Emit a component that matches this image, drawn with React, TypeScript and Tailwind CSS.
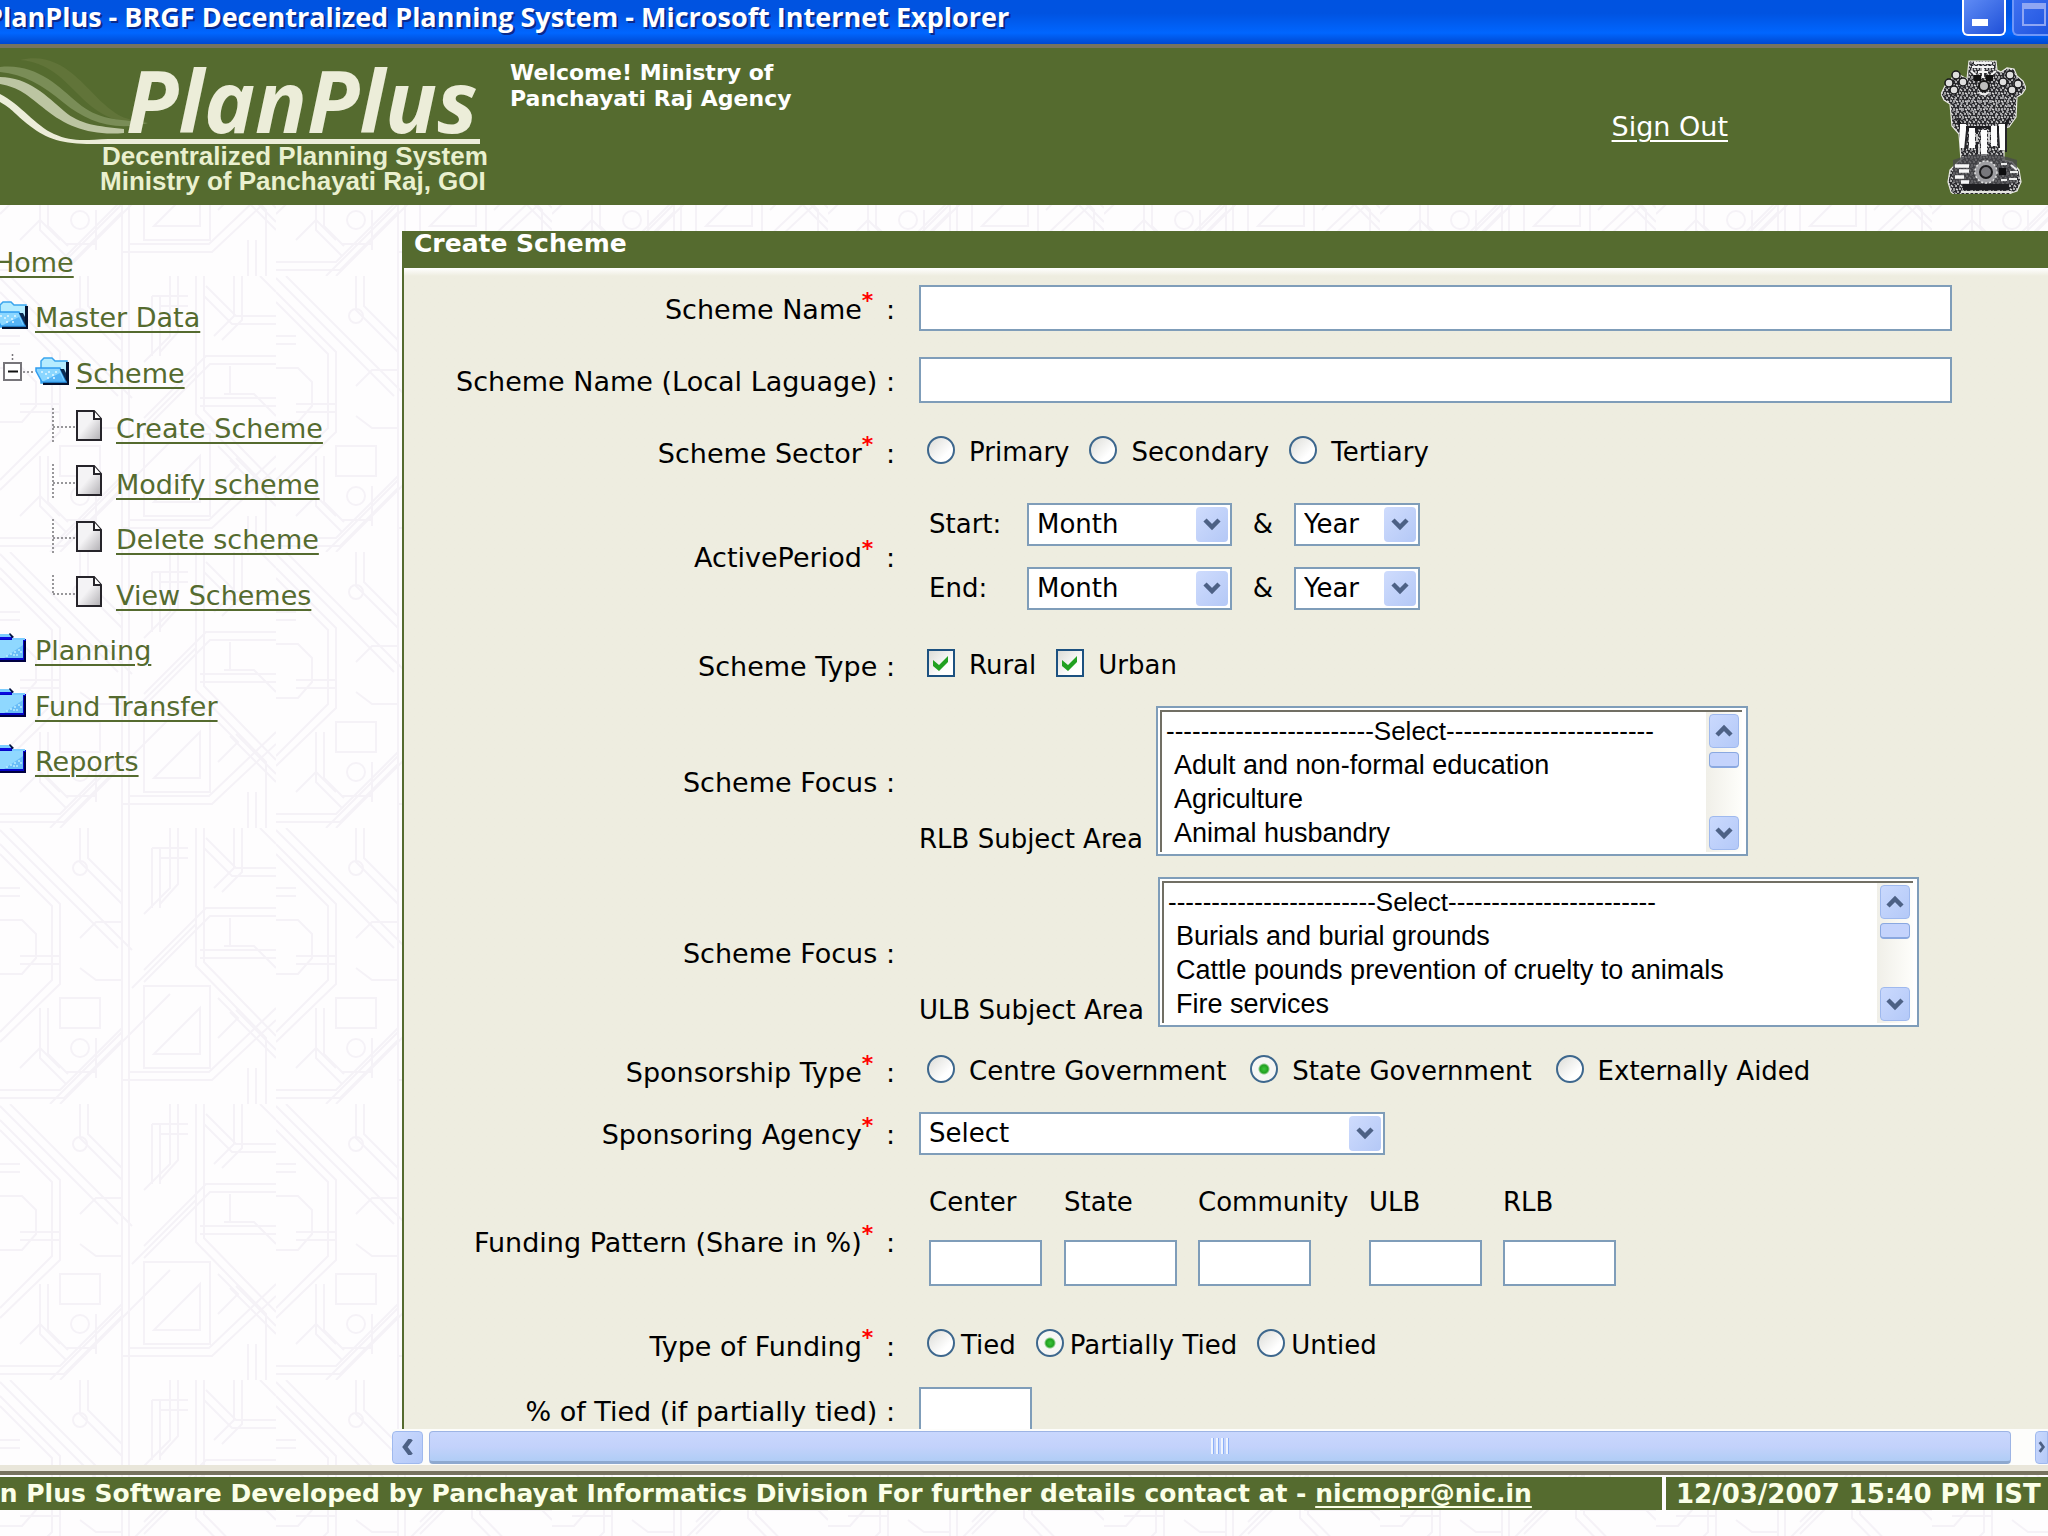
import type { ReactNode } from "react";

/* ---------- background ---------- */

function Backdrop() {
  return (
    <svg className="pointer-events-none absolute inset-0 h-full w-full" aria-hidden="true">
      <defs>
        <pattern id="lattice" width="276" height="276" patternUnits="userSpaceOnUse">
          <g fill="none" stroke="#f5f2f7" strokeWidth="2">
            <path d="M122 0v276M129 0v276M196 0v138l70 72v66M204 0v134l72 74M260 0l16 16M0 16l60 60v80l-60 58M0 26l52 52v74L0 204M0 92h22l14 14v24l-14 16H0M122 252h90l64-60M129 244h80l67-64M144 154l66-66h66M144 142l62-62h70M144 158h66v82h-66zM154 226l46-46v46zM196 96l-64 64M276 40h-40l-30-30M276 48h-44l-28-28M88 0v30l34 34M80 0v34l42 42M0 262h60l62-62M0 270h64l58-58M96 210v40M80 110l16-16h26M80 140l16 12h26M224 118h30l22 22M214 60l20-20v-40M222 64l20-20v-44" />
            <path d="M10 0l122 122M0 2l118 118M276 230l-46-46M276 222l-40-40M60 276l110-110M50 276l72-72M20 128h40M20 136h40M200 122h76M200 130h76M170 0v60l-26 26M178 0v56l-18 20M40 180v50l26 26M48 180v46l20 20" />
            <circle cx="80" cy="40" r="7" />
            <circle cx="80" cy="220" r="9" />
            <path d="M60 170h40v30H60zM66 244h30M230 90v28M160 20v60M152 20v60M152 20h36M160 30h28M0 60h20M0 68h20M256 240v36M248 240v36M218 170l20 20-20 20M20 240l20-20 20 20" />
          </g>
        </pattern>
      </defs>
      <rect width="100%" height="100%" fill="#fefdfe" />
      <rect width="100%" height="100%" fill="url(#lattice)" />
    </svg>
  );
}

/* ---------- icons ---------- */

function OpenFolder({ className }: { className?: string }) {
  return (
    <svg width="34" height="28" viewBox="0 0 34 28" className={className} aria-hidden="true">
      <path d="M6 8V4l3-3h8l3 3h12v22H6z" fill="#b5ecff" stroke="#3aa5ee" strokeWidth="1.5" />
      <path d="M31 5h3v23H8v-3h23z" fill="#05112e" />
      <path d="M1 11h24l6 14H7L1 14z" fill="#8ad6ff" stroke="#2f9cf0" strokeWidth="1.5" />
      <path d="M25 12l6 12v-8l-2-4z" fill="#0a2a52" />
      <path d="M9 24h20l-4-8z" fill="#55b4f7" />
      <path d="M6 15h2m2 2h2m1-2h2m2 3h2m1-3h2m-10 6h2m4 0h2" stroke="#e3f8ff" strokeWidth="1.6" />
    </svg>
  );
}

function ClosedFolder({ className }: { className?: string }) {
  return (
    <svg width="34" height="29" viewBox="0 0 34 29" className={className} aria-hidden="true">
      <path d="M0 2h19l3 4h12v22H0z" fill="#0505c8" />
      <path d="M32 8h2v21H0v-2h32z" fill="#000040" />
      <path d="M0 7h31v18H0z" fill="#8fd8ff" />
      <path d="M0 1h18l2 3H0z" fill="#7ccdff" />
      <path d="M20 5h13v2H20z" fill="#7ccdff" />
      <path d="M18 0l4 4-2 1-3-4z" fill="#03103c" />
      <path d="M0 5h19" stroke="#0a0ae0" strokeWidth="2" />
      <path d="M31 12v13H12z" fill="#69bcf7" />
      <path d="M14 23h2m2-2h2m2-2h2m2-2h2m-4 5h2m2-3h2m-9 3h2" stroke="#b9ecff" strokeWidth="1.6" />
    </svg>
  );
}

function PageIcon() {
  return (
    <svg width="26" height="31" viewBox="0 0 26 31" aria-hidden="true">
      <defs>
        <linearGradient id="sheet" x1="0" y1="0" x2="1" y2="1">
          <stop offset="0.45" stopColor="#f4f3f5" />
          <stop offset="1" stopColor="#b0aeb2" />
        </linearGradient>
      </defs>
      <path d="M1 1h17l7 8v21H1z" fill="url(#sheet)" stroke="#26242a" strokeWidth="2" />
      <path d="M18 1v8h7" fill="#fff" stroke="#26242a" strokeWidth="2" />
    </svg>
  );
}

function Chevron({ dir }: { dir: "up" | "down" | "left" | "right" }) {
  const d = {
    up: "M2 12l7-7 7 7",
    down: "M2 4l7 7 7-7",
    left: "M12 0L6 8l6 8",
    right: "M6 0l6 8-6 8",
  }[dir];
  return (
    <svg width="18" height="16" viewBox="0 0 18 16" aria-hidden="true">
      <path d={d} fill="none" stroke="#4d6185" strokeWidth="4.5" />
    </svg>
  );
}

function Branch({ last }: { last?: boolean }) {
  return (
    <svg width="24" height="34" viewBox="0 0 24 34" className="shrink-0" aria-hidden="true">
      <path d={last ? "M1 0v19" : "M1 0v34"} stroke="#77757a" strokeWidth="1.5" strokeDasharray="2 2" />
      <path d="M1 19h23" stroke="#77757a" strokeWidth="1.5" strokeDasharray="2 2" />
    </svg>
  );
}

function Emblem() {
  return (
    <svg width="85" height="134" viewBox="0 0 85 134" aria-label="State Emblem of India" role="img">
      <defs>
        <pattern id="carve" width="9" height="8" patternUnits="userSpaceOnUse">
          <rect width="9" height="8" fill="#2a2a2e" />
          <path d="M0 1h2M4 0v3M7 4h2M1 5l2 2M5 6h2M6 1l2 1" stroke="#d6d6d6" strokeWidth="1.4" />
          <path d="M2 3h2M5 4v1M0 7h1" stroke="#8b8b8f" strokeWidth="1.4" />
        </pattern>
      </defs>
      <path
        d="M28 1h27l1 9 4 2 6-4 7 1 3 7 6 5 3 7-4 6-5 3-1 20-7 10-5 1v32l8 2 7 8 2 12-4 9-6 2-3 7-3 3H21l-3-5-8-6-3-10 2-12 8-8 3-2-2-26-7-8-2-22-6-4-3-6 4-8 5-4 3-6 7-1 7 4z"
        fill="url(#carve)"
        stroke="#e9e9e4"
        strokeWidth="1.2"
      />
      <path d="M33 3h18M31 7h22M30 11l5 4M55 11l-5 4M42 6v12M37 12h10" stroke="#f4f4f4" strokeWidth="2.2" fill="none" />
      <path d="M33 15h7v6h-7zM45 15h7v6h-7z" fill="#111" />
      <circle cx="43" cy="26" r="5" fill="#bdbdbd" stroke="#161616" strokeWidth="2" />
      <path d="M38 32q5 5 10 0" stroke="#eee" strokeWidth="2" fill="none" />
      <g fill="#dedede" stroke="#18181a" strokeWidth="1.5">
        <circle cx="15" cy="15" r="4" />
        <circle cx="8" cy="23" r="4" />
        <circle cx="13" cy="30" r="4" />
        <circle cx="22" cy="22" r="4" />
        <circle cx="69" cy="15" r="4" />
        <circle cx="77" cy="24" r="4" />
        <circle cx="71" cy="30" r="4" />
        <circle cx="62" cy="22" r="4" />
      </g>
      <path d="M14 38l2 16M20 36l1 20M26 34l1 22M32 38l1 20M38 40v18M44 40v20M50 40v18M56 36l-1 20M62 36l-1 20M68 38l-2 16" stroke="#a9a9ad" strokeWidth="1.6" strokeDasharray="3 3" />
      <path d="M15 56l8 10h38l9-11-5 14-8 3-14-4-14 4-10-4z" fill="#1b1b1f" />
      <path d="M22 64v24M31 68v20M43 70v26M53 66v20M61 64v26" stroke="#fdfdfd" strokeWidth="6" />
      <path d="M26 70l-2 20M36 70v24M57 72l1 16M65 66v26" stroke="#232327" strokeWidth="2" />
      <path d="M36 74v8M38 84v10M48 72v10" stroke="#e5e5e5" strokeWidth="1.6" />
      <path d="M12 100q30-12 64 0v22q-32 10-64 0z" fill="#4a4a4e" opacity="0.75" />
      <circle cx="45" cy="112" r="11" fill="#9d9da1" stroke="#e2e2e2" strokeWidth="1.5" strokeDasharray="2 2" />
      <circle cx="45" cy="112" r="6" fill="#77777c" stroke="#1b1b1d" strokeWidth="2" />
      <path d="M14 106h14M18 111h10M14 117h9M20 122h8" stroke="#f7f7f7" strokeWidth="3.4" />
      <rect x="58" y="108" width="7" height="7" fill="#0d0d0f" />
      <path d="M70 105l6 5M69 112h8M68 119h8M60 104h6M60 120h6" stroke="#ececec" strokeWidth="2.2" />
      <path d="M22 127h46" stroke="#1c1c1f" strokeWidth="6" />
      <path d="M20 132h50" stroke="#e5e5e0" strokeWidth="1.8" />
    </svg>
  );
}

function Logo() {
  return (
    <svg width="500" height="157" viewBox="0 48 500 157" className="shrink-0" role="img" aria-label="PlanPlus">
      <path d="M20 60C60 50 82 84 104 104s30 14 42 18c-30 4-50-10-66-26S48 62 20 60z" fill="#617439" />
      <path d="M0 67c36-4 58 19 78 36s38 16 70 20c-34 9-62-2-84-20S24 74 0 72z" fill="#7a8d57" />
      <path d="M0 77c28 0 48 20 64 34s34 15 60 18v4c-34 3-58-7-78-23S20 88 0 84z" fill="#bcc5a2" />
      <path d="M0 94c20 10 36 32 54 40s30 6 54 5h372v5H100c-34 1-52-4-70-18S14 110 0 102z" fill="#ecedd9" />
      <text x="126" y="133" fontFamily="'Open Sans', sans-serif" fontWeight="700" fontStyle="italic" fontSize="86" fill="#ecedd9">
        PlanPlus
      </text>
      <g fontFamily="'Liberation Sans', sans-serif" fontWeight="700" fontSize="26" fill="#eaf0cf">
        <text x="102" y="165">Decentralized Planning System</text>
        <text x="100" y="190">Ministry of Panchayati Raj, GOI</text>
      </g>
    </svg>
  );
}

/* ---------- navigation ---------- */

const link = "underline decoration-2 underline-offset-4 text-[#556b2f]";

function NavRow({ children }: { children: ReactNode }) {
  return <li className="flex flex-1 items-center whitespace-nowrap">{children}</li>;
}

function Sidebar() {
  const pages = ["Create Scheme", "Modify scheme", "Delete scheme", "View Schemes"];
  const groups = ["Planning", "Fund Transfer", "Reports"];
  return (
    <nav className="relative w-[392px] shrink-0 overflow-hidden text-[27px]">
      <ul className="mt-1 flex h-[555px] flex-col">
        <NavRow>
          <a href="#home" className={`${link} -ml-1.5`}>Home</a>
        </NavRow>
        <NavRow>
          <OpenFolder className="-ml-1.5 mr-[7px] mb-1.5 shrink-0" />
          <a href="#master" className={link}>Master Data</a>
        </NavRow>
        <NavRow>
          <svg width="32" height="32" viewBox="0 0 32 32" className="mb-2 ml-[3px] shrink-0" aria-hidden="true">
            <path d="M9.5 0v7M20 18h12" stroke="#77757a" strokeWidth="1.5" strokeDasharray="2 2" />
            <rect x="1" y="9" width="17" height="17" fill="#fff" stroke="#77757a" strokeWidth="2" />
            <path d="M5 17.500h10" stroke="#111" strokeWidth="2" />
          </svg>
          <OpenFolder className="mb-1.5 mr-[7px] shrink-0" />
          <a href="#scheme" className={link}>Scheme</a>
        </NavRow>
        {pages.map((p, i) => (
          <NavRow key={p}>
            <span className="mb-2 ml-[52px] mr-3.5 flex items-center">
              <Branch last={i === pages.length - 1} />
              <PageIcon />
            </span>
            <a href="#page" className={link}>{p}</a>
          </NavRow>
        ))}
        {groups.map((g) => (
          <NavRow key={g}>
            <ClosedFolder className="-ml-2 mr-[9px] mb-2 shrink-0" />
            <a href="#group" className={link}>{g}</a>
          </NavRow>
        ))}
      </ul>
    </nav>
  );
}

/* ---------- form controls ---------- */

const box = "border-2 border-[#7f9db9] bg-white outline-none";

function Row({
  label,
  required,
  htmlFor,
  className,
  children,
}: {
  label: string;
  required?: boolean;
  htmlFor?: string;
  className: string;
  children: ReactNode;
}) {
  const text = (
    <>
      {label}
      {required && <sup className="mr-1 text-[22px] font-bold text-[#f00]">*</sup>} :
    </>
  );
  return (
    <div className={`flex gap-6 ${className}`}>
      <div className="w-[491px] shrink-0 self-center whitespace-nowrap pt-1 text-right text-[27px]">
        {htmlFor ? <label htmlFor={htmlFor}>{text}</label> : <span>{text}</span>}
      </div>
      {children}
    </div>
  );
}

function Radio({ name, label, checked, tight }: { name: string; label: string; checked?: boolean; tight?: boolean }) {
  return (
    <label className={`flex items-center ${tight ? "gap-1.5" : "gap-3.5"}`}>
      <input
        type="radio"
        name={name}
        defaultChecked={checked}
        className="mb-1 size-7 shrink-0 appearance-none rounded-full border-2 border-[#3d678d] bg-[linear-gradient(135deg,#dcdcd7,#ffffff_70%)] checked:bg-[radial-gradient(circle,#3cc43c_0,#21a121_4px,#f6f6f4_6px)]"
      />
      {label}
    </label>
  );
}

function Check({ label }: { label: string }) {
  return (
    <label className="flex items-center gap-3.5">
      <span className="relative mb-1 flex">
        <input type="checkbox" defaultChecked className="peer size-7 appearance-none border-2 border-[#1c5180] bg-[linear-gradient(135deg,#dcdcd7,#ffffff_70%)]" />
        <svg width="28" height="28" viewBox="0 0 28 28" className="pointer-events-none absolute inset-0 hidden peer-checked:block" aria-hidden="true">
          <path d="M6 11l6 5 9-9v6l-9 9-6-5z" fill="#21a121" />
        </svg>
      </span>
      {label}
    </label>
  );
}

function Dropdown({ id, label, option, className }: { id: string; label: string; option: string; className: string }) {
  return (
    <span className={`relative flex h-[43px] ${className}`}>
      <select id={id} aria-label={label} className={`${box} w-full appearance-none pl-2 text-[26px]`}>
        <option>{option}</option>
      </select>
      <span className="pointer-events-none absolute inset-y-1 right-1 flex w-8 items-center justify-center rounded-sm bg-linear-to-br from-[#cfdcfd] to-[#b4c8f6]">
        <Chevron dir="down" />
      </span>
    </span>
  );
}

const scrollButton = "flex items-center justify-center rounded-sm border border-[#9fb9ee] bg-linear-to-br from-[#cad9fd] to-[#b4c9f8]";

function ListBox({ id, items, className }: { id: string; items: string[]; className: string }) {
  return (
    <div className={`${box} flex h-[150px] p-0.5 pr-1 ${className}`}>
      <div className="flex w-full overflow-hidden border-l-2 border-t-2 border-[#716f64]">
        <select
          id={id}
          size={4}
          className="h-[140px] min-w-0 flex-1 overflow-hidden bg-white pl-1 pt-1 font-['Liberation_Sans',sans-serif] text-[27px] outline-none"
        >
          <option className="h-[34px] p-0 text-[26px] leading-[34px]">------------------------Select------------------------</option>
          {items.map((t) => (
            <option key={t} className="h-[34px] p-0 pl-2 leading-[34px]">{t}</option>
          ))}
        </select>
        <div className="flex w-9 flex-col items-center bg-linear-to-r from-[#f0efe8] to-[#fefefb] py-0.5">
          <button type="button" aria-label="Scroll up" className={`${scrollButton} h-[34px] w-[30px]`}>
            <Chevron dir="up" />
          </button>
          <span className="mt-1 h-4 w-[30px] rounded-sm border border-b-2 border-[#8aa8e0] bg-[#c4d3fc]" />
          <button type="button" aria-label="Scroll down" className={`${scrollButton} mt-auto h-[34px] w-[30px]`}>
            <Chevron dir="down" />
          </button>
        </div>
      </div>
    </div>
  );
}

function Period({ label, id }: { label: string; id: string }) {
  return (
    <div className="flex h-16 items-center">
      <span className="w-[98px]">{label}</span>
      <Dropdown id={`${id}-month`} label={`${label} month`} option="Month" className="w-[205px]" />
      <span className="w-[62px] text-center">&amp;</span>
      <Dropdown id={`${id}-year`} label={`${label} year`} option="Year" className="w-[126px]" />
    </div>
  );
}

function Share({ label, className }: { label: string; className: string }) {
  return (
    <label className={`flex flex-col gap-[21px] ${className}`}>
      <span className="leading-[34px]">{label}</span>
      <input type="text" className={`${box} h-[46px] w-[113px]`} />
    </label>
  );
}

function SchemeForm() {
  return (
    <form className="flex-1 overflow-hidden bg-linear-to-b from-white to-[#eeede0] to-[8px] text-[26px] leading-[34px] text-black">
      <Row label="Scheme Name" required htmlFor="name" className="mt-1 h-[72px] items-center">
        <input id="name" type="text" className={`${box} mr-24 h-[46px] flex-1 px-2`} />
      </Row>
      <Row label="Scheme Name (Local Laguage)" htmlFor="local" className="h-[72px] items-center">
        <input id="local" type="text" className={`${box} mr-24 h-[46px] flex-1 px-2`} />
      </Row>
      <Row label="Scheme Sector" required className="h-[72px] items-center">
        <div className="flex gap-5 pl-2">
          <Radio name="sector" label="Primary" />
          <Radio name="sector" label="Secondary" />
          <Radio name="sector" label="Tertiary" />
        </div>
      </Row>
      <Row label="ActivePeriod" required className="h-[136px] items-center">
        <div className="pl-2.5">
          <Period label="Start:" id="start" />
          <Period label="End:" id="end" />
        </div>
      </Row>
      <Row label="Scheme Type" className="h-[82px] items-center">
        <div className="flex gap-5 pl-2">
          <Check label="Rural" />
          <Check label="Urban" />
        </div>
      </Row>
      <Row label="Scheme Focus" className="mb-[21px] items-end">
        <div className="flex items-end gap-2">
          <label htmlFor="rlb" className="w-[229px]">RLB Subject Area</label>
          <ListBox id="rlb" className="w-[592px]" items={["Adult and non-formal education", "Agriculture", "Animal husbandry"]} />
        </div>
      </Row>
      <Row label="Scheme Focus" className="items-end">
        <div className="flex items-end gap-2">
          <label htmlFor="ulb" className="w-[231px]">ULB Subject Area</label>
          <ListBox
            id="ulb"
            className="w-[761px]"
            items={["Burials and burial grounds", "Cattle pounds prevention of cruelty to animals", "Fire services"]}
          />
        </div>
      </Row>
      <Row label="Sponsorship Type" required className="mt-2 h-[72px] items-center">
        <div className="flex gap-6 pl-2">
          <Radio name="sponsor" label="Centre Government" />
          <Radio name="sponsor" label="State Government" checked />
          <Radio name="sponsor" label="Externally Aided" />
        </div>
      </Row>
      <Row label="Sponsoring Agency" required htmlFor="agency" className="h-[52px] items-center">
        <Dropdown id="agency" label="Sponsoring Agency" option="Select" className="w-[466px]" />
      </Row>
      <Row label="Funding Pattern (Share in %)" required className="mt-[26px] h-28">
        <div className="flex pl-2.5">
          <Share label="Center" className="w-[135px]" />
          <Share label="State" className="w-[134px]" />
          <Share label="Community" className="w-[171px]" />
          <Share label="ULB" className="w-[134px]" />
          <Share label="RLB" className="w-[134px]" />
        </div>
      </Row>
      <Row label="Type of Funding" required className="mt-3 h-[72px] items-center">
        <div className="flex gap-5 pl-2">
          <Radio name="funding" label="Tied" tight />
          <Radio name="funding" label="Partially Tied" checked tight />
          <Radio name="funding" label="Untied" tight />
        </div>
      </Row>
      <Row label="% of Tied (if partially tied)" htmlFor="tied" className="mt-1.5 h-[46px] items-center">
        <input id="tied" type="text" className={`${box} h-[46px] w-[113px] px-2`} />
      </Row>
    </form>
  );
}

function HorizontalScroll() {
  return (
    <div className="flex h-9 shrink-0 items-center bg-[#fdfdfb]">
      <button type="button" aria-label="Scroll left" className={`${scrollButton} h-[33px] w-[31px]`}>
        <Chevron dir="left" />
      </button>
      <div className="ml-1.5 mr-6 flex h-[33px] flex-1 items-center justify-center gap-0.5 rounded-sm border border-b-[3px] border-[#9db4e4] border-b-[#8ea9cf] bg-linear-to-b from-[#c9d7fd] via-[#c3d2fb] to-[#b0cdf6]">
        {[0, 1, 2, 3].map((n) => (
          <span key={n} className="h-4 w-[3px] border-l-2 border-r border-l-[#eef4fe] border-r-[#8cb0f8]" />
        ))}
      </div>
      <button type="button" aria-label="Scroll right" className={`${scrollButton} h-[33px] w-[13px] justify-start overflow-hidden rounded-r-none`}>
        <Chevron dir="right" />
      </button>
    </div>
  );
}

/* ---------- page ---------- */

export default function App() {
  return (
    <div className="relative flex h-screen flex-col overflow-hidden font-['DejaVu_Sans',sans-serif]">
      <Backdrop />

      <header className="relative shrink-0">
        <div className="flex h-12 justify-between overflow-hidden border-b-4 border-[#77735f] bg-linear-to-b from-[#0053e1] from-30% via-[#0066ff] via-75% to-[#0048d0]">
          <h1 className="-ml-3.5 whitespace-nowrap font-['Open_Sans',sans-serif] text-[27px] font-bold leading-[34px] text-white [text-shadow:2px_2px_0_#0a2a8c]">
            PlanPlus - BRGF Decentralized Planning System - Microsoft Internet Explorer
          </h1>
          <div className="flex shrink-0 gap-1.5">
            <button type="button" aria-label="Minimize" className="flex h-9 w-11 items-end rounded-b-md border-2 border-t-0 border-white bg-linear-to-br from-[#5f8bf5] to-[#1f4fd8] pb-2 pl-2">
              <span className="h-[7px] w-4 bg-white" />
            </button>
            <button type="button" aria-label="Maximize" className="flex h-9 w-9 items-end rounded-bl-md border-b-2 border-l-2 border-[#6f97f8] bg-linear-to-br from-[#3f70f0] to-[#1f55e0] pb-2 pl-2">
              <span className="h-[23px] w-6 border-2 border-t-[6px] border-[#8fa6f3]" />
            </button>
          </div>
        </div>
        <div className="flex h-[157px] bg-[#556b2f] text-white">
          <Logo />
          <p className="ml-2.5 mt-3 whitespace-nowrap text-[22px] font-bold leading-[26px]">
            Welcome! Ministry of
            <br />
            Panchayati Raj Agency
          </p>
          <a href="#signout" className="ml-auto mr-[213px] mt-[62px] self-start text-[27px] leading-[34px] underline decoration-2 underline-offset-4">
            Sign Out
          </a>
          <span className="mr-[22px] mt-3">
            <Emblem />
          </span>
        </div>
      </header>

      <div className="relative mt-[26px] flex min-h-0 flex-1">
        <Sidebar />
        <main className="flex min-w-0 flex-1 flex-col">
          <section className="ml-2.5 flex min-h-0 flex-1 flex-col border-l-2 border-[#556b2f]">
            <h2 className="h-[37px] shrink-0 bg-[#556b2f] pl-2.5 text-[25px] font-bold leading-[25px] text-white">Create Scheme</h2>
            <SchemeForm />
          </section>
          <HorizontalScroll />
        </main>
      </div>

      <footer className="relative mb-[26px] shrink-0">
        <div className="h-2.5 border-b-4 border-[#77735f] bg-[#e9e6da]" />
        <div className="mt-0.5 flex h-[33px] gap-1 whitespace-nowrap text-[25px] font-bold leading-[34px] text-[#fbffe8]">
          <p className="flex-1 overflow-hidden bg-[#556b2f]">
            <span className="-ml-11">
              Plan Plus Software Developed by Panchayat Informatics Division For further details contact at -{" "}
              <a href="mailto:nicmopr@nic.in" className="underline decoration-2 underline-offset-4">nicmopr@nic.in</a>
            </span>
          </p>
          <p className="w-[382px] overflow-hidden bg-[#556b2f] pl-2.5 text-[26px]">12/03/2007 15:40 PM IST</p>
        </div>
      </footer>
    </div>
  );
}
